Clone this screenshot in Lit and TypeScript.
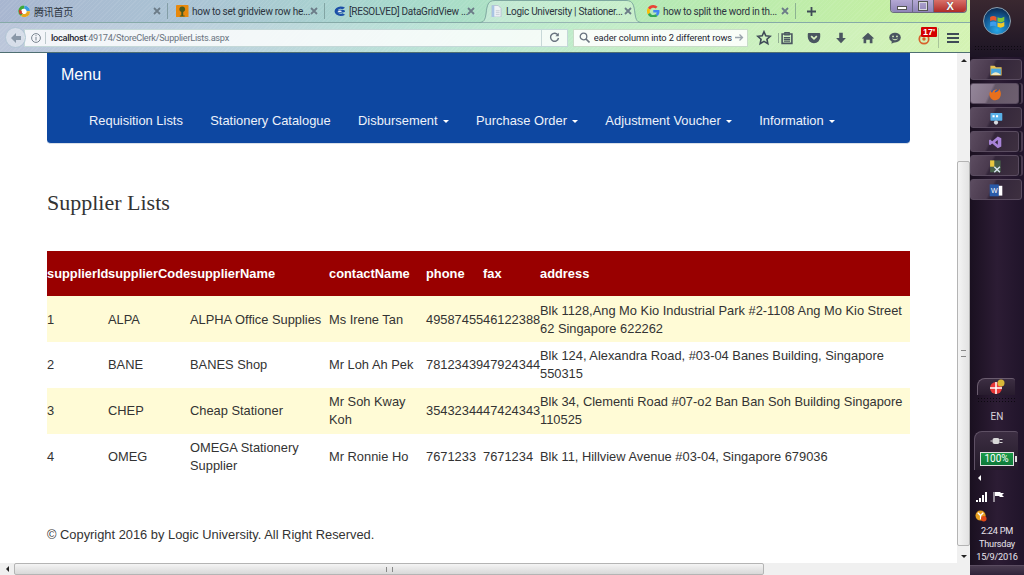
import { LitElement, html, css, svg } from "lit";
import { customElement } from "lit/decorators.js";

const tabs = [
  { icon: "qq", title: "腾讯首页", active: false },
  { icon: "cat", title: "how to set gridview row he...", active: false },
  { icon: "c", title: "[RESOLVED] DataGridView ...", active: false },
  { icon: "doc", title: "Logic University | Stationer...", active: true },
  { icon: "g", title: "how to split the word in th...", active: false },
];

const tabIcons: Record<string, unknown> = {
  qq: svg`<circle cx="6.5" cy="6.5" r="6" fill="#fff"/><path d="M6.5.5A6 6 0 0 1 12.5 6.5L9 6.5A2.6 2.6 0 0 0 6.5 4Z" fill="#3a9be0"/><path d="M12.5 6.5A6 6 0 0 1 3 11.5L5 9A2.6 2.6 0 0 0 9 6.5Z" fill="#e8a81c"/><path d="M3 11.5A6 6 0 0 1 6.5.5L6.5 4A2.6 2.6 0 0 0 5 9Z" fill="#3fa83a"/><path d="M2 9.5A6 6 0 0 1 1 5L4 6A2.6 2.6 0 0 0 5 9Z" fill="#d8382c"/>`,
  cat: svg`<rect width="13" height="13" rx="1" fill="#e8890c"/><path d="M6.5 1.5c2 0 3 1.4 3 3s-1 2.5-2 2.8V11H9v1H4v-1h1.500V7.300c-1-.3-2-1.200-2-2.800s1-3 3-3Z" fill="#4a5a20"/>`,
  c: svg`<path d="M12.500 2.800A6.500 5 0 1 0 12.500 10.200L10 8.500A3.500 2.500 0 1 1 10 4.500Z" fill="#1c4fa8"/><ellipse cx="7.500" cy="6.500" rx="5" ry="1.500" fill="#1c4fa8"/><ellipse cx="7" cy="6.500" rx="2.200" ry=".7" fill="#fff"/>`,
  doc: svg`<path d="M2 .5h6.500l3 3v9h-9.500Z" fill="#eef2f6" stroke="#b8c4d0"/><path d="M2 .5h2.500v12h-2.500Z" fill="#a8c4e4"/><path d="M6 6h4M6 8h4M6 10h4" stroke="#c4ccd4"/>`,
  g: svg`<path d="M6.500 0A6.500 6.500 0 0 1 11 1.800L9 3.700A3.700 3.700 0 0 0 3.200 5L.9 3.200A6.500 6.500 0 0 1 6.500 0Z" fill="#ea4335"/><path d="M.9 3.200 3.200 5a3.700 3.700 0 0 0 0 3L.9 9.800a6.500 6.500 0 0 1 0-6.600Z" fill="#fbbc05"/><path d="M.9 9.800 3.200 8A3.700 3.700 0 0 0 9 9.700L11 11.400A6.500 6.500 0 0 1 .9 9.800Z" fill="#34a853"/><path d="M13 6.500c0 2-.7 3.700-2 4.900L9 9.700c.6-.5 1-1.100 1.200-1.900H6.500V5.300H12.800c.1.400.2.800.2 1.200Z" fill="#4285f4"/>`,
};

const toolIcons = [
  svg`<path d="M9 2 11 6.600l5 .5-3.700 3.300 1 4.900L9 12.800l-4.300 2.500 1-4.900L2 7.100l5-.5Z" fill="none" stroke="#3f4a57" stroke-width="1.800"/>`,
  svg`<path d="M3.500 4.500h11v10.500h-11Z" fill="none" stroke="#4a5560" stroke-width="1.800"/><path d="M6.500 3h5v2.500h-5ZM5.500 8.500h7M5.500 10.500h7M5.500 12.500h7" fill="none" stroke="#4a5560" stroke-width="1.300"/>`,
  svg`<path d="M3 3.500h12a1 1 0 0 1 1 1v3.500a7 7 0 0 1-14 0V4.500a1 1 0 0 1 1-1Z" fill="#4a5560"/><path d="M5.800 7 9 10 12.200 7" fill="none" stroke="#d8f0c0" stroke-width="2"/>`,
  svg`<path d="M7 3h4v6h3.500L9 15 3.500 9H7Z" fill="#4a5560"/>`,
  svg`<path d="M9 3 16 9.500h-2V15h-3v-4H7v4H4V9.500H2Z" fill="#4a5560"/>`,
  svg`<ellipse cx="9" cy="8.500" rx="6.500" ry="5.500" fill="#4a5560"/><path d="M5.500 12.500 5 15.500 9 13.500Z" fill="#4a5560"/><circle cx="6.800" cy="7.200" r="1" fill="#d8f0c0"/><circle cx="11.200" cy="7.200" r="1" fill="#d8f0c0"/><path d="M6.200 10c1.800 1.300 3.800 1.300 5.600 0" fill="none" stroke="#d8f0c0" stroke-width="1.100"/>`,
];

const rows = [
  ["1", "ALPA", "ALPHA Office Supplies", "Ms Irene Tan", "49587455", "46122388", "Blk 1128,Ang Mo Kio Industrial Park #2-1108 Ang Mo Kio Street 62 Singapore 622262"],
  ["2", "BANE", "BANES Shop", "Mr Loh Ah Pek", "78123439", "47924344", "Blk 124, Alexandra Road, #03-04 Banes Building, Singapore 550315"],
  ["3", "CHEP", "Cheap Stationer", "Mr Soh Kway Koh", "35432344", "47424343", "Blk 34, Clementi Road #07-o2 Ban Ban Soh Building Singapore 110525"],
  ["4", "OMEG", "OMEGA Stationery Supplier", "Mr Ronnie Ho", "7671233", "7671234", "Blk 11, Hillview Avenue #03-04, Singapore 679036"],
];
const heads = ["supplierId", "supplierCode", "supplierName", "contactName", "phone", "fax", "address"];
const widths = [61, 82, 139, 97, 57, 57, 370];
const links = [
  { t: "Requisition Lists" },
  { t: "Stationery Catalogue" },
  { t: "Disbursement", c: true },
  { t: "Purchase Order", c: true },
  { t: "Adjustment Voucher", c: true },
  { t: "Information", c: true },
];

const taskIcons = [
  { split: false, icon: svg`<path d="M2 4h6l2 2h8v12H2Z" fill="#e8c050"/><rect x="3" y="8" width="14" height="9" fill="#4aa8e0"/><path d="M3 17c4-5 9-5 14 0Z" fill="#f0e8c0"/>` },
  { split: true, hi: true, icon: svg`<circle cx="10" cy="10.500" r="7" fill="#2f5fb0"/><path d="M16 3C19 7 19 12 17 15 14 20 7 20 4 16 1 12 2 7 4 5 4 7 5 8 6 8 7 5 10 3 13 4 10 5 9 7 10 8 14 7 16 5 16 3Z" fill="#e8701c"/>` },
  { split: false, icon: svg`<rect x="2" y="3" width="17" height="11" rx="1" fill="#58b0e8"/><rect x="5" y="6" width="3" height="3" fill="#fff"/><rect x="10" y="6" width="3" height="3" fill="#fff"/><circle cx="10" cy="16.500" r="3" fill="#d8dce0"/>` },
  { split: true, icon: svg`<path d="M14 2 19 4.500v12L14 19 6 12l-3 2.500-1.500-1V7.500L3 6.500 6 9Zm0 5-4 3.500 4 3.500Z" fill="#a884d8"/>` },
  { split: true, icon: svg`<rect x="3" y="2" width="15" height="17" fill="#46604a"/><rect x="3" y="2" width="6" height="9" fill="#e8c840"/><path d="M9 11l8 8M17 11l-8 8" stroke="#d8e4f0" stroke-width="2"/>` },
  { split: false, icon: svg`<rect x="8" y="4" width="11" height="14" fill="#fff"/><rect x="1" y="2" width="13" height="17" fill="#2a5aa8"/><text x="3" y="14" font-size="10" font-family="Liberation Sans" fill="#fff">W</text>` },
];

@customElement("app-root")
export class AppRoot extends LitElement {
  static styles = css`
    :host { display: grid; grid-template-columns: 970px 54px; width: 1024px; height: 575px; overflow: hidden; font-family: "Liberation Sans", Arial, sans-serif; color: #333; background: #fff; }
    .window { display: flex; flex-direction: column; min-width: 0; }

    /* browser chrome */
    .chrome { height: 53px; flex: none; display: flex; flex-direction: column; border-bottom: 1px solid #4f6f72; box-sizing: border-box;
      background: repeating-linear-gradient(135deg, rgba(255,255,255,.07) 0 1px, rgba(255,255,255,0) 1px 3px), linear-gradient(90deg, #a8b6d0 0, #aac4d4 200px, #a7d9cd 400px, #aee6bd 560px, #bcecad 750px, #c8f09e 970px); }
    .tabstrip { height: 23px; flex: none; display: flex; padding-left: 10px; font: 10px Roboto, "Noto Sans CJK SC", sans-serif; letter-spacing: -.28px; color: #2c3440; position: relative; box-sizing: border-box; border-bottom: 1px solid #86aaa8; }
    .tab { width: 157px; height: 23px; box-sizing: border-box; display: flex; align-items: center; padding: 0 7px 1px 8px; position: relative; }
    .tab:first-child { width: 158px; }
    .tab.sep::after { content: ""; position: absolute; right: 0; top: 3px; height: 16px; width: 1px; background: rgba(90,120,120,.5); }
    .tabshape { position: absolute; left: -3px; top: 0; width: 163px; height: 23px; }
    .tab svg.fav { width: 12.500px; height: 12.500px; flex: none; margin-right: 3.500px; position: relative; }
    .tab .label { flex: 1; min-width: 0; white-space: nowrap; position: relative; }
    .tab .x { width: 8px; height: 8px; flex: none; position: relative; }
    .plus { width: 26px; height: 22px; flex: none; display: flex; align-items: center; justify-content: center; margin-left: 2px; }
    .plus svg { width: 9px; height: 9px; }
    .winctl { position: absolute; left: 890px; top: 0; width: 77px; height: 13px; display: flex; border: 1px solid #6a6a80; border-top: none; border-radius: 0 0 4px 4px; overflow: hidden; box-sizing: border-box; }
    .winctl div { display: flex; align-items: center; justify-content: center; }
    .wmin { width: 21px; background: linear-gradient(#b4a8d4, #8f84b8); border-right: 1px solid #6a6a80; }
    .wres { width: 20px; background: linear-gradient(#b4a8d4, #8f84b8); border-right: 1px solid #6a6a80; }
    .wcls { flex: 1; background: linear-gradient(#d87068, #b02c28); }
    .wmin i { width: 8px; height: 2px; background: #fff; margin-top: 4px; box-shadow: 0 0 0 1px #555; }
    .wres i { width: 6px; height: 6px; border: 1px solid #d8d8e0; outline: 1px solid #555; }
    .wcls b { font: bold 11px "Liberation Sans", sans-serif; color: #fff; text-shadow: 0 0 1px #333; line-height: 11px; }

    .navrow { flex: 1; display: flex; align-items: center; background: rgba(255,255,255,.22); padding: 0 0 0 5px; }
    .back { width: 21px; height: 21px; flex: none; border-radius: 50%; background: rgba(255,255,255,.4); border: 1px solid #b0c4d4; box-sizing: border-box; display: flex; align-items: center; justify-content: center; margin-right: -2px; position: relative; }
    .back svg { width: 12px; height: 12px; }
    .url { width: 544px; height: 18px; flex: none; box-sizing: border-box; background: rgba(255,255,255,.82); border: 1px solid #c4d8d8; display: flex; align-items: center; font: 9.2px Roboto, sans-serif; letter-spacing: -.28px; color: #6a7480; padding-left: 6px; }
    .url .info { width: 10px; height: 10px; flex: none; margin-right: 4px; }
    .url .bar { width: 1px; height: 12px; background: #bcc8cc; margin-right: 5px; }
    .url b { color: #1e2630; font-weight: 500; }
    .url .spacer { flex: 1; }
    .url .reload { width: 25px; height: 16px; flex: none; display: flex; align-items: center; justify-content: center; border-left: 1px solid #c8d8d8; }
    .url .reload svg { width: 11px; height: 11px; }
    .search { width: 175px; height: 18px; flex: none; margin-left: 5px; box-sizing: border-box; background: rgba(255,255,255,.88); border: 1px solid #c8dcc8; display: flex; align-items: center; font: 9.300px Roboto, sans-serif; letter-spacing: -.1px; color: #1e2630; padding: 0 3px 0 5px; overflow: hidden; }
    .search svg.mag { width: 11px; height: 11px; flex: none; margin-right: 4px; }
    .search span { flex: 1; white-space: nowrap; overflow: hidden; display: flex; justify-content: flex-end; }
    .search svg.go { width: 9px; height: 9px; flex: none; margin-left: 3px; }
    .tools { display: flex; align-items: center; flex: 1; padding-left: 8px; }
    .tools .t { width: 16px; height: 16px; flex: none; margin-right: 11px; }
    .tools .t.star { margin-right: 7px; }
    .tools .t.clip { box-shadow: -4px 0 0 -3px rgba(70,90,90,.45); }
    .badgewrap { position: relative; width: 16px; height: 16px; margin: 0 16px 0 0; flex: none; }
    .badgewrap svg { width: 12px; height: 12px; margin: 3px 0 0 4px; display: block; }
    .badge { position: absolute; left: 7px; top: -3px; background: #d40000; color: #fff; font: bold 9px "Liberation Sans", sans-serif; padding: 0 2px; border-radius: 1px; line-height: 10px; white-space: nowrap; }
    .burger { width: 12px; height: 10px; margin-left: 1px; border-top: 2px solid #3f4a57; border-bottom: 2px solid #3f4a57; position: relative; box-sizing: border-box; flex: none; }
    .burger::after { content: ""; position: absolute; left: 0; right: 0; top: 2px; height: 2px; background: #3f4a57; }
    .burger::before { content: ""; position: absolute; left: -9px; top: -7px; width: 1px; height: 20px; background: rgba(70,90,90,.3); }

    /* page */
    .middle { flex: 1; min-height: 0; display: flex; }
    .page { flex: 1; min-width: 0; overflow: hidden; padding: 0 47px; box-sizing: border-box; width: 957px; }
    .navbar { width: 863px; height: 91px; box-sizing: border-box; background: #0d47a1; color: #fff; border-radius: 0 0 4px 4px; border-bottom: 1px solid #d8dfe8; }
    .brand { height: 44px; padding: 3px 0 0 14px; box-sizing: border-box; font-size: 16px; line-height: 37px; }
    .links { display: flex; padding-left: 42px; gap: 27.400px; font-size: 12.900px; line-height: 18px; margin-top: 15px; color: #eef2fa; }
    .caret { display: inline-block; width: 0; height: 0; margin-left: 5px; border-top: 3px solid #fff; border-left: 3px solid transparent; border-right: 3px solid transparent; vertical-align: middle; }
    h2 { margin: 0; font: 400 22px/28px "Liberation Serif", serif; color: #333; padding-top: 45px; height: 62px; }
    table { border-collapse: collapse; table-layout: fixed; width: 863px; font-size: 12.870px; line-height: 18px; }
    th { background: #990000; color: #fff; text-align: left; font-weight: bold; padding: 0; height: 45px; white-space: nowrap; }
    td { padding: 0; height: 46px; vertical-align: middle; }
    tbody tr:first-child td { padding-top: 1px; height: 45px; }
    tr.alt td { background: #fffbd6; }
    .foot { font-size: 12.870px; line-height: 18px; margin-top: 46px; }

    /* scrollbars */
    .vscroll { width: 13px; flex: none; background: #f0f0f0; display: flex; flex-direction: column; align-items: center; box-sizing: border-box; }
    .varrow { height: 14px; flex: none; display: flex; align-items: center; justify-content: center; width: 100%; }
    .vtrack { flex: 1; width: 100%; padding-top: 94px; padding-bottom: 3px; box-sizing: border-box; display: flex; }
    .vthumb { flex: 1; background: linear-gradient(90deg, #f4f4f4, #e2e2e2); border: 1px solid #b4b4b4; border-radius: 2px; display: flex; align-items: center; justify-content: center; }
    .vthumb i { width: 5px; height: 5px; border-top: 1px solid #888; border-bottom: 1px solid #888; }
    .hscroll { height: 12px; flex: none; background: #f0f0f0; display: flex; align-items: center; }
    .harrow { width: 14px; flex: none; display: flex; justify-content: center; }
    .hthumb { width: 750px; height: 12px; box-sizing: border-box; background: linear-gradient(#f4f4f4, #d8d8d8); border: 1px solid #b4b4b4; border-radius: 2px; display: flex; align-items: center; justify-content: center; }
    .hthumb i { width: 5px; height: 5px; border-left: 1px solid #888; border-right: 1px solid #888; position: relative; }
    .hright { flex: 1; }
    .up { border-left: 3px solid transparent; border-right: 3px solid transparent; border-bottom: 3px solid #222; }
    .down { border-left: 3px solid transparent; border-right: 3px solid transparent; border-top: 3px solid #222; }
    .left { width: 0; border-top: 3px solid transparent; border-bottom: 3px solid transparent; border-right: 3px solid #222; }

    /* taskbar */
    .taskbar { background: linear-gradient(90deg, #1a1020, #2c1c34 50%, #20142a); display: flex; flex-direction: column; color: #e4e0e8; font: 10px Roboto, sans-serif; align-items: stretch; }
    .orbwrap { height: 57px; flex: none; padding-top: 7px; box-sizing: border-box; display: flex; flex-direction: column; align-items: center; background: linear-gradient(#3a2830, #1c1424); }
    .orb { width: 28px; height: 28px; flex: none; border-radius: 50%; background: radial-gradient(circle at 50% 85%, #28a8e8, #14609c 50%, #0a2c54 85%); border: 1px solid #8aa0b0; box-sizing: border-box; display: flex; align-items: center; justify-content: center; }
    .orb svg { width: 17px; height: 17px; }
    .orbdots { width: 47px; height: 7px; margin-top: 10px; background: radial-gradient(circle, #0c0810 0 .8px, transparent 1px) 0 0 / 3px 3px; }
    .tbtns { display: flex; flex-direction: column; gap: 3px; margin-top: 2px; }
    .tbtn { height: 21px; width: 52px; border-radius: 3px; border: 1px solid #5a4c60; box-sizing: border-box; background: linear-gradient(115deg, #5c4c60 0, #4a3a4e 40%, #33263a 45%, #3e3040 100%); display: flex; align-items: center; justify-content: center; }
    .tbtn.split { width: 49px; box-shadow: 2px 0 0 #1c1424, 4px 0 0 #4a3c50; }
    .tbtn.hi { background: linear-gradient(115deg, #94869a 0, #857588 40%, #655868 45%, #6e5f70 100%); }
    .tbtn svg { width: 14px; height: 14px; }
    .grow { flex: 1; }
    .notif { width: 38px; height: 17px; flex: none; margin-left: 7px; border-radius: 8px 3px 0 0; border-top: 1px solid #6a5c6e; border-left: 1px solid #6a5c6e; background: linear-gradient(#3c2e42, #281c2e); box-sizing: border-box; display: flex; align-items: center; justify-content: center; position: relative; }
    .notif svg { width: 16px; height: 16px; }
    .dots { height: 6px; flex: none; margin: 2px 0 0 7px; width: 38px; background: radial-gradient(circle, #0c0810 0 .8px, transparent 1px) 0 0 / 3px 3px; }
    .en { text-align: center; line-height: 12px; height: 12px; flex: none; margin-top: 8px; font-size: 10px; color: #d8d4dc; }
    .power { width: 44px; height: 39px; flex: none; margin: 8px 0 0 4px; box-sizing: border-box; border-radius: 8px 3px 0 0; border-top: 1px solid #5e5064; border-left: 1px solid #5e5064; background: linear-gradient(#3c2e42, #241a2a); display: flex; flex-direction: column; align-items: center; gap: 7px; padding-top: 5px; }
    .power svg { width: 13px; height: 8px; flex: none; }
    .batt { width: 34px; height: 14px; flex: none; border: 1px solid #e0e0e0; background: linear-gradient(#1a9a48, #0e7a38); color: #fff; font: 10px/12px Roboto, sans-serif; text-align: center; box-sizing: border-box; position: relative; }
    .batt::after { content: ""; position: absolute; right: -4px; top: 3px; width: 2px; height: 6px; background: #e0e0e0; }
    .tri { width: 0; flex: none; border-top: 3px solid transparent; border-bottom: 3px solid transparent; border-right: 3px solid #fff; margin: 5px 0 0 8px; }
    .sys { display: flex; gap: 6px; padding-left: 6px; margin-top: 10px; height: 11px; flex: none; align-items: flex-end; }
    .sys svg { width: 11px; height: 11px; }
    .alert { width: 12px; height: 12px; margin: 8px 0 0 5px; flex: none; }
    .clock { text-align: center; line-height: 13px; height: 39px; flex: none; font-size: 9.200px; letter-spacing: -.25px; margin-top: 2px; white-space: nowrap; color: #e8e4ec; }
    .tbase { height: 10px; margin: 2px 0 0 0; box-sizing: border-box; background: linear-gradient(#4a3c50, #30243a); flex: none; border-top: 1px solid #5a4c60; }
  `;

  render() {
    return html`
      <div class="window">
        <div class="chrome">
          <div class="tabstrip">
            ${tabs.map((t, i) => html`
              <div class="tab ${i === 2 || i === 3 ? "" : "sep"}">
                ${t.active ? svg`<svg class="tabshape" viewBox="0 0 163 23"><path d="M0 22.500C5 22.500 6 20 7 14 8 5 9 .5 16 .5H147C154 .5 155 5 156 14 157 20 158 22.500 163 22.500" fill="rgba(255,255,255,.28)" stroke="#7fa8a0"/></svg>` : ""}
                <svg class="fav" viewBox="0 0 13 13">${tabIcons[t.icon]}</svg>
                <span class="label">${t.title}</span>
                <svg class="x" viewBox="0 0 8 8"><path d="M1 1l6 6M7 1l-6 6" stroke="#6c7c88" stroke-width="1.800"/></svg>
              </div>`)}
            <div class="plus"><svg viewBox="0 0 9 9"><path d="M4.500 0v9M0 4.500h9" stroke="#3f4a57" stroke-width="1.800"/></svg></div>
            <div class="winctl">
              <div class="wmin"><i></i></div>
              <div class="wres"><i></i></div>
              <div class="wcls"><b>X</b></div>
            </div>
          </div>
          <div class="navrow">
            <div class="back"><svg viewBox="0 0 12 12"><path d="M6 1 1 6l5 5V8h5V4H6Z" fill="#8a98a8"/></svg></div>
            <div class="url">
              <svg class="info" viewBox="0 0 10 10"><circle cx="5" cy="5" r="4.400" fill="none" stroke="#7a8590"/><path d="M5 4v3.500M5 2.200v1" stroke="#7a8590"/></svg>
              <span class="bar"></span>
              <span><b>localhost</b>:49174/StoreClerk/SupplierLists.aspx</span>
              <span class="spacer"></span>
              <span class="reload"><svg viewBox="0 0 11 11"><path d="M9 3.200A4 4 0 1 0 9.500 6" fill="none" stroke="#6a7480" stroke-width="1.400"/><path d="M9.800.8v3.400H6.400Z" fill="#6a7480"/></svg></span>
            </div>
            <div class="search">
              <svg class="mag" viewBox="0 0 11 11"><circle cx="4.500" cy="4.500" r="3.300" fill="none" stroke="#6a7480" stroke-width="1.300"/><path d="M7 7l3.500 3.500" stroke="#6a7480" stroke-width="1.600"/></svg>
              <span>header column into 2 different rows</span>
              <svg class="go" viewBox="0 0 9 9"><path d="M0 4.500h7M4.500 1.500l3 3-3 3" fill="none" stroke="#9aa4ac" stroke-width="1.300"/></svg>
            </div>
            <div class="tools">
              ${toolIcons.map((ic, i) => html`<svg class="t ${i === 0 ? "star" : i === 1 ? "clip" : ""}" viewBox="0 0 18 18">${ic}</svg>`)}
              <div class="badgewrap">
                <svg viewBox="0 0 14 14"><circle cx="7" cy="7" r="5.500" fill="none" stroke="#d8602c" stroke-width="2"/><circle cx="7" cy="7" r="2" fill="#d8602c"/></svg>
                <span class="badge">17'</span>
              </div>
              <div class="burger"></div>
            </div>
          </div>
        </div>
        <div class="middle">
          <div class="page">
            <div class="navbar">
              <div class="brand">Menu</div>
              <div class="links">
                ${links.map((l) => html`<span>${l.t}${l.c ? html`<span class="caret"></span>` : ""}</span>`)}
              </div>
            </div>
            <h2>Supplier Lists</h2>
            <table>
              <colgroup>${widths.map((w) => html`<col style="width:${w}px" />`)}</colgroup>
              <thead><tr>${heads.map((h) => html`<th>${h}</th>`)}</tr></thead>
              <tbody>
                ${rows.map((r, i) => html`<tr class="${i % 2 === 0 ? "alt" : ""}">${r.map((c) => html`<td>${c}</td>`)}</tr>`)}
              </tbody>
            </table>
            <div class="foot">© Copyright 2016 by Logic University. All Right Reserved.</div>
          </div>
          <div class="vscroll">
            <div class="varrow"><div class="up"></div></div>
            <div class="vtrack"><div class="vthumb"><i></i></div></div>
            <div class="varrow"><div class="down"></div></div>
          </div>
        </div>
        <div class="hscroll">
          <div class="harrow"><div class="left"></div></div>
          <div class="hthumb"><i></i></div>
          <div class="hright"></div>
        </div>
      </div>
      <div class="taskbar">
        <div class="orbwrap">
          <div class="orb"><svg viewBox="0 0 15 15"><path d="M1 3.500C3 2.500 4.500 2.500 6.500 3.500V7.200C4.500 6.200 3 6.200 1 7.200Z" fill="#e8582c"/><path d="M7.500 3.700C9.500 4.700 11 4.700 13.500 3.200V7C11 8.400 9.500 8.400 7.500 7.400Z" fill="#7cc83c"/><path d="M1 8.200C3 7.200 4.500 7.200 6.500 8.200V12C4.500 11 3 11 1 12Z" fill="#3c9cec"/><path d="M7.500 8.400C9.500 9.400 11 9.400 13.500 8V11.800C11 13.200 9.500 13.200 7.500 12.200Z" fill="#f4c828"/></svg></div>
          <div class="orbdots"></div>
        </div>
        <div class="tbtns">
          ${taskIcons.map((b) => html`<div class="tbtn ${b.hi ? "hi" : ""} ${b.split ? "split" : ""}"><svg viewBox="0 0 20 20">${b.icon}</svg></div>`)}
        </div>
        <div class="grow"></div>
        <div class="notif"><svg viewBox="0 0 16 16"><circle cx="7" cy="9" r="6" fill="#e83838"/><path d="M7 3v12M1 9h12" stroke="#fff" stroke-width="1.500"/><circle cx="12" cy="4" r="3.500" fill="#d8b838"/></svg></div>
        <div class="dots"></div>
        <div class="en">EN</div>
        <div class="power">
          <svg viewBox="0 0 12 8"><rect x="2" y="1" width="7" height="6" rx="2" fill="#d8d8d8"/><path d="M9 2.500h3M9 5.500h3M0 4h2" stroke="#d8d8d8"/></svg>
          <div class="batt">100%</div>
        </div>
        <div class="tri"></div>
        <div class="sys">
          <svg viewBox="0 0 11 11"><path d="M0 9h2v2H0ZM3 7h2v4H3ZM6 4h2v7H6ZM9 1h2v10H9Z" fill="#fff"/></svg>
          <svg viewBox="0 0 11 11"><path d="M1 1v10" stroke="#fff"/><path d="M2 1h5l1 1h3L9 4l2 2H7L6 5H2Z" fill="#fff"/></svg>
        </div>
        <svg class="alert" viewBox="0 0 13 13"><circle cx="6" cy="6" r="5.500" fill="#e8a020"/><path d="M3 3l3 3 3-3M6 6v4" stroke="#fff" stroke-width="1.400" fill="none"/><circle cx="9.500" cy="9.500" r="3" fill="#e04818"/></svg>
        <div class="clock">2:24 PM<br />Thursday<br />15/9/2016</div>
        <div class="tbase"></div>
      </div>
    `;
  }
}
